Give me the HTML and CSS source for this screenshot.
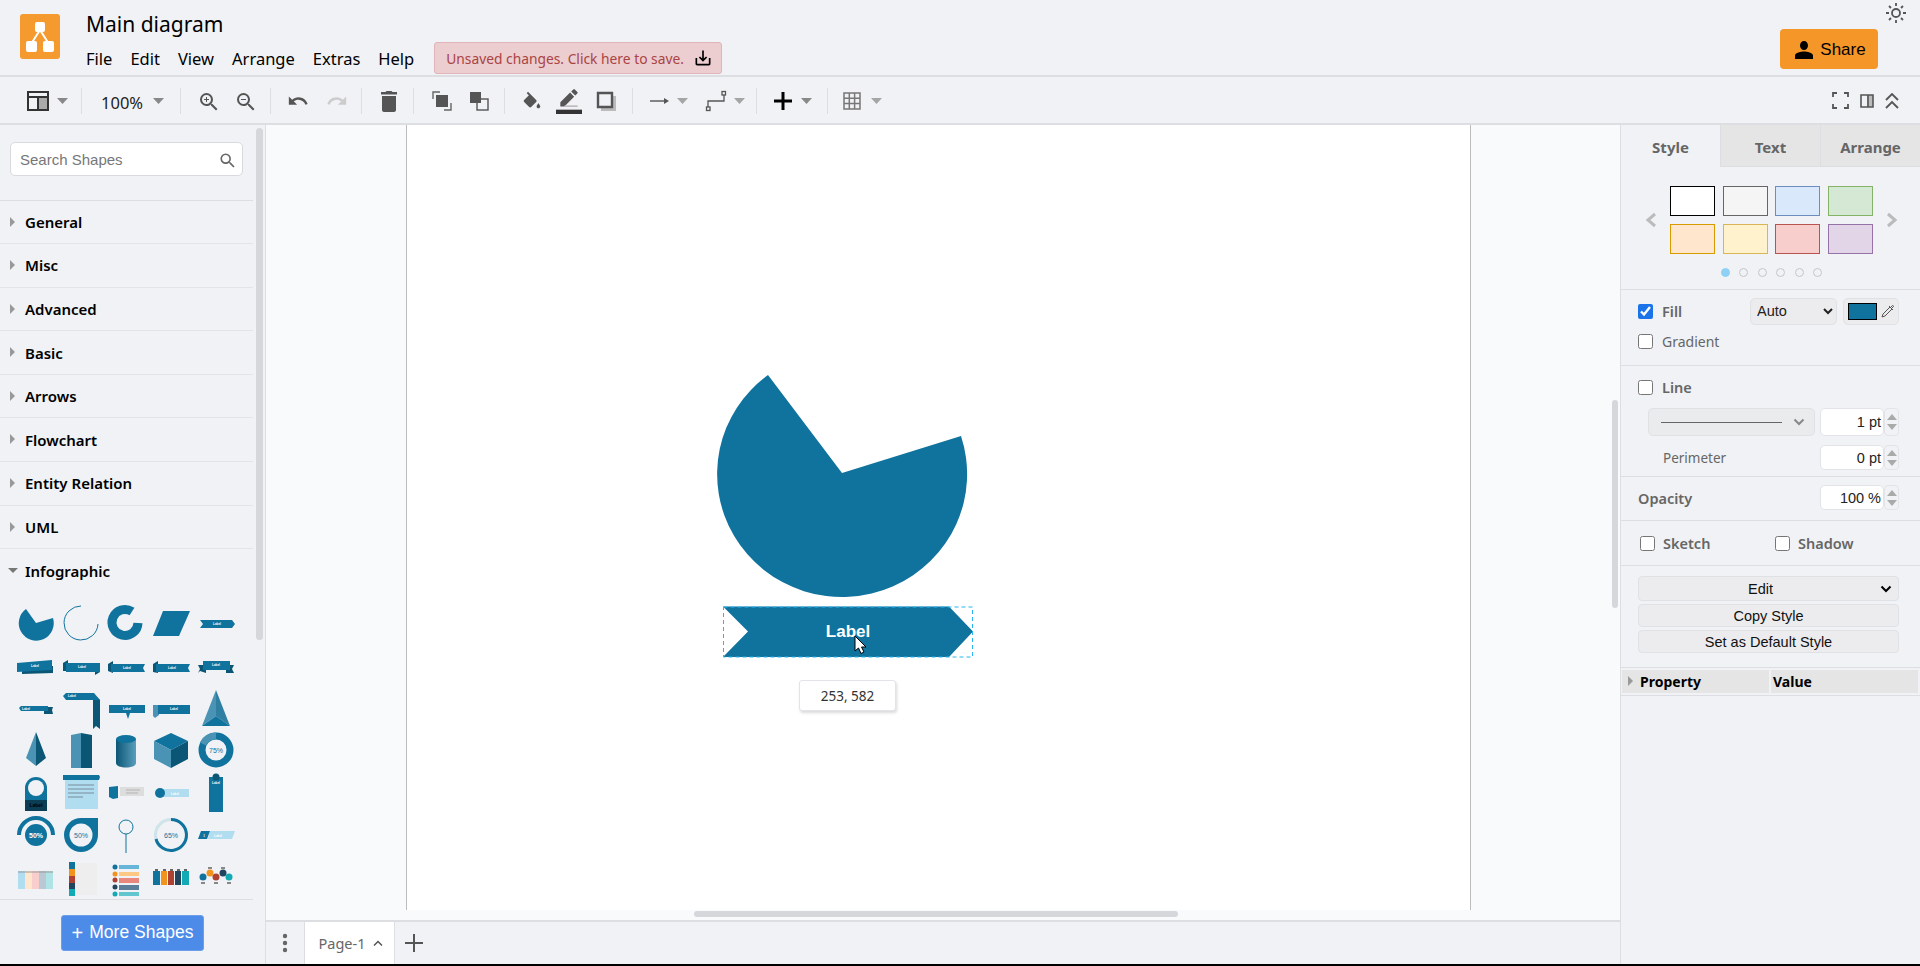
FILE: index.html
```html
<!DOCTYPE html>
<html lang="en">
<head>
    <meta charset="UTF-8">
    <title>Main diagram</title>
    <link rel="stylesheet" href="styles.css">
</head>
<body>
<svg class="sprites" width="0" height="0">
    <symbol id="i-lens" viewBox="0 0 24 24"><path d="M15.5 14h-.79l-.28-.27A6.471 6.471 0 0 0 16 9.5 6.5 6.5 0 1 0 9.5 16c1.61 0 3.09-.59 4.23-1.57l.27.28v.79l5 4.99L20.49 19l-4.99-5zm-6 0C7.01 14 5 11.99 5 9.5S7.01 5 9.5 5 14 7.01 14 9.5 11.99 14 9.5 14z"/></symbol>
    <symbol id="i-caret" viewBox="0 0 11 6"><path d="M0 0h11L5.5 6z"/></symbol>
    <symbol id="i-chev" viewBox="0 0 12 8"><path d="M1.5 1.5 6 6l4.5-4.5" fill="none" stroke="currentColor" stroke-width="2"/></symbol>
</svg>

<div class="app">
    <header class="header">
        <div class="logo">
            <svg width="30" height="34" viewBox="0 0 30 34">
                <path d="M15 10 6 24M15 10l9 14" stroke="#fff" stroke-width="2" fill="none"/>
                <rect x="10" y="2" width="10" height="10" rx="2" fill="#fff"/>
                <rect x="1" y="21" width="11" height="11" rx="2" fill="#fff"/>
                <rect x="18" y="21" width="11" height="11" rx="2" fill="#fff"/>
            </svg>
        </div>
        <div class="title-col">
            <div class="title">Main diagram</div>
            <div class="menu-row">
                <a class="menu">File</a>
                <a class="menu">Edit</a>
                <a class="menu">View</a>
                <a class="menu">Arrange</a>
                <a class="menu">Extras</a>
                <a class="menu">Help</a>
                <div class="save-note">
                    <span>Unsaved changes. Click here to save.</span>
                    <svg width="20" height="20" viewBox="0 0 24 24"><path d="M19 12v7H5v-7H3v7c0 1.1.9 2 2 2h14c1.1 0 2-.9 2-2v-7h-2zm-6 .67l2.59-2.58L17 11.5l-5 5-5-5 1.41-1.41L11 12.67V3h2z"/></svg>
                </div>
            </div>
        </div>
        <div class="header-right">
            <svg class="sun" width="22" height="22" viewBox="0 0 22 22" stroke="#555" fill="none">
                <circle cx="11" cy="11" r="4" stroke-width="1.8"/>
                <path d="M11 1v3M11 18v3M1 11h3M18 11h3M4 4l2 2M16 16l2 2M4 18l2-2M16 6l2-2" stroke-width="1.8"/>
            </svg>
            <div class="share">
                <svg width="24" height="24" viewBox="0 0 24 24"><path d="M12 12c2.21 0 4-1.79 4-4.5S14.21 3 12 3 8 4.8 8 7.5 9.79 12 12 12zm0 1.5c-2.67 0-9 1.34-9 4V21h18v-3.5c0-2.66-6.33-4-9-4z"/></svg>
                <span>Share</span>
            </div>
        </div>
    </header>

    <div class="toolbar">
        <div class="tb-group tb-view">
            <svg width="22" height="24" viewBox="0 0 22 24"><path d="M1 3h20v18H1z" fill="none" stroke="#333" stroke-width="2"/><path d="M1 8h20M11 8v13" stroke="#333" stroke-width="2"/><path d="M12 9h8v11h-8z" fill="#aaa"/></svg>
            <svg class="caret" width="11" height="6"><use href="#i-caret"/></svg>
        </div>
        <div class="tb-group tb-zoom">
            <span class="zoom-val">100%</span>
            <svg class="caret" width="11" height="6"><use href="#i-caret"/></svg>
        </div>
        <div class="tb-group tb-lens">
            <svg width="21" height="21" viewBox="0 0 21 21"><use href="#i-lens" width="24" height="24"/><path d="M12 10h-2v2H9v-2H7V9h2V7h1v2h2z"/></svg>
            <svg width="21" height="21" viewBox="0 0 21 21"><use href="#i-lens" width="24" height="24"/><path d="M7 9h5v1H7z"/></svg>
        </div>
        <div class="tb-group tb-undo">
            <svg width="22" height="22" viewBox="0 0 24 24"><path d="M12.5 8c-2.65 0-5.05.99-6.9 2.6L2 7v9h9l-3.62-3.62c1.39-1.16 3.16-1.88 5.12-1.88 3.54 0 6.55 2.31 7.6 5.5l2.37-.78C21.08 11.03 17.15 8 12.5 8z"/></svg>
            <svg class="dim" width="22" height="22" viewBox="0 0 24 24"><path d="M18.4 10.6C16.55 8.99 14.15 8 11.5 8c-4.65 0-8.58 3.03-9.96 7.22L3.9 16c1.05-3.19 4.05-5.5 7.6-5.5 1.95 0 3.73.72 5.12 1.88L13 16h9V7l-3.6 3.6z"/></svg>
        </div>
        <div class="tb-group tb-del">
            <svg width="24" height="24" viewBox="0 0 24 24"><path d="M5 21c0 1.1.9 2 2 2h10c1.1 0 2-.9 2-2V7H5v14zM20 3h-4.5l-1-1h-5l-1 1H4v2.5h16V3z"/></svg>
        </div>
        <div class="tb-group tb-order">
            <svg width="20" height="20" viewBox="0 0 20 20"><path d="M1 8V1h7M12 19h7v-7" fill="none" stroke="#666" stroke-width="1.4"/><rect x="4" y="4" width="12" height="12" fill="#555"/></svg>
            <svg width="20" height="20" viewBox="0 0 20 20"><rect x="1" y="1" width="11" height="11" fill="#555"/><rect x="8" y="8" width="11" height="11" fill="#f0f2f5" stroke="#555" stroke-width="1.4"/><rect x="8" y="8" width="4" height="4" fill="#555"/></svg>
        </div>
        <div class="tb-group tb-style">
            <svg width="22" height="24" viewBox="0 0 24 24"><path d="M16.56 10.94 7.62 2 6.21 3.41l2.38 2.38-5.15 5.15c-.59.59-.59 1.54 0 2.12l5.5 5.5c.29.29.68.44 1.06.44s.77-.15 1.06-.44l5.5-5.5c.59-.58.59-1.53 0-2.12zM19 14.5s-2 2.17-2 3.5c0 1.1.9 2 2 2s2-.9 2-2c0-1.33-2-3.5-2-3.5z"/></svg>
            <svg width="26" height="26" viewBox="0 0 24 24"><path d="M16.75 8 13 4.25l-9 9V17h3.75zm2.96-2.96c.39-.39.39-1.02 0-1.41l-2.34-2.34a1 1 0 0 0-1.41 0L14 3.25 17.75 7z"/><path d="M0 20h24v4H0z" fill="#333"/><path d="M8 16h12v1.5H8z" fill="#bbb"/></svg>
            <svg class="shadow-ic" width="20" height="20" viewBox="0 0 20 20"><path d="M5 5h15v15H5z" fill="#bbb"/><path d="M2 2h14v14H2z" fill="#f0f2f5" stroke="#555" stroke-width="2.4"/></svg>
        </div>
        <div class="tb-group tb-edge">
            <svg width="20" height="12" viewBox="0 0 20 12"><path d="M0 5.3h15v1.4H0z"/><path d="M14 3l5 3-5 3z"/></svg>
            <svg class="caret lt" width="11" height="6"><use href="#i-caret"/></svg>
            <svg class="wp" width="22" height="22" viewBox="0 0 22 22" fill="none" stroke="#555" stroke-width="1.3"><path d="M3 17v-6h16V5"/><rect x="1.5" y="17" width="3.5" height="3.5"/><rect x="17" y="1.5" width="3.5" height="3.5"/></svg>
            <svg class="caret lt" width="11" height="6"><use href="#i-caret"/></svg>
        </div>
        <div class="tb-group tb-plus">
            <svg class="plus" width="18" height="18" viewBox="0 0 18 18"><path d="M7.5 0h3v7.5H18v3h-7.5V18h-3v-7.5H0v-3h7.5z" fill="#000"/></svg>
            <svg class="caret" width="11" height="6"><use href="#i-caret"/></svg>
        </div>
        <div class="tb-group tb-table">
            <svg width="18" height="18" viewBox="0 0 18 18" fill="none" stroke="#777" stroke-width="1.5"><path d="M1 1h16v16H1zM1 6.3h16M1 11.6h16M6.3 1v16M11.6 1v16"/></svg>
            <svg class="caret lt" width="11" height="6"><use href="#i-caret"/></svg>
        </div>
        <div class="tb-right">
            <svg width="17" height="17" viewBox="0 0 17 17" fill="none" stroke="#555" stroke-width="1.8"><path d="M1 5V1h4M12 1h4v4M16 12v4h-4M5 16H1v-4"/></svg>
            <svg width="14" height="14" viewBox="0 0 14 14"><path d="M7 1h6v12H7z" fill="#bbb"/><path d="M1 1h12v12H1zM8 1v12" fill="none" stroke="#555" stroke-width="1.6"/></svg>
            <svg width="14" height="16" viewBox="0 0 14 16" fill="none" stroke="#555" stroke-width="1.8"><path d="M1 7l6-6 6 6M1 15l6-6 6 6"/></svg>
        </div>
    </div>

    <div class="main">
        <aside class="sidebar">
            <div class="search-wrap">
                <div class="search">
                    <span>Search Shapes</span>
                    <svg width="17" height="17" viewBox="0 0 21 21" fill="#666"><use href="#i-lens" width="24" height="24"/></svg>
                </div>
            </div>
            <div class="cat"><i class="tri"></i>General</div>
            <div class="cat"><i class="tri"></i>Misc</div>
            <div class="cat"><i class="tri"></i>Advanced</div>
            <div class="cat"><i class="tri"></i>Basic</div>
            <div class="cat"><i class="tri"></i>Arrows</div>
            <div class="cat"><i class="tri"></i>Flowchart</div>
            <div class="cat"><i class="tri"></i>Entity Relation</div>
            <div class="cat"><i class="tri"></i>UML</div>
            <div class="cat cat-open"><i class="tri-down"></i>Infographic</div>

            <div class="palette">
                <!-- row 1 -->
                <svg viewBox="0 0 40 40"><path d="M20 20 37 15A17.5 17.5 0 1 1 10 6Z" fill="#10739e"/></svg>
                <svg viewBox="0 0 40 40"><path d="M20 3A17 17 0 1 0 37 21" fill="none" stroke="#10739e" stroke-width="1"/></svg>
                <svg viewBox="0 0 40 40"><path d="M26 8.5A13 13 0 1 0 32 20" fill="none" stroke="#10739e" stroke-width="9"/></svg>
                <svg viewBox="0 0 40 40"><path d="M2 33 12 8H39L28 33Z" fill="#10739e"/></svg>
                <svg viewBox="0 0 40 40"><path d="M4 17H36L39 21 36 25H4L7 21Z" fill="#10739e"/><text class="tiny" x="21" y="22">Label</text></svg>
                <!-- row 2 -->
                <svg viewBox="0 0 40 40"><path d="M6 20H37V27L6 28Z" fill="#0b5575"/><path d="M1 17 36 14V24L1 26Z" fill="#10739e"/><text class="tiny" x="19" y="21">Label</text></svg>
                <svg viewBox="0 0 40 40"><path d="M7 14V25H2V17Z" fill="#0b5575"/><path d="M5 17H39V26H5Z" fill="#10739e"/><path d="M34 26H39L34 29Z" fill="#0b5575"/><text class="tiny" x="21" y="22">Label</text></svg>
                <svg viewBox="0 0 40 40"><path d="M7 15V27L2 25V18Z" fill="#0b5575"/><path d="M5 18H39L37 22 39 26H5Z" fill="#10739e"/><text class="tiny" x="21" y="23">Label</text></svg>
                <svg viewBox="0 0 40 40"><path d="M7 15V27L2 26V18Z" fill="#0b5575"/><path d="M5 18H39L37 22 39 26H5Z" fill="#10739e"/><text class="tiny" x="21" y="23">Label</text></svg>
                <svg viewBox="0 0 40 40"><path d="M2 19H10V27L4 25 2 27 4 23ZM38 19H30V27L36 27 38 27 36 23Z" fill="#0b5575"/><path d="M7 15H34V24H7Z" fill="#10739e"/><text class="tiny" x="20" y="20">Label</text></svg>
                <!-- row 3 -->
                <svg viewBox="0 0 40 40"><path d="M26 19H37L36 22 37 26H28V23H26Z" fill="#0b5575"/><path d="M3 20 5 18H32V23H5Z" fill="#10739e"/><text class="tiny" x="10" y="22">Label</text></svg>
                <svg viewBox="0 0 40 40"><path d="M32 6 39 12V41L35 38 32 41Z" fill="#0b5575"/><path d="M2 8 5 5H33L39 12H5Z" fill="#10739e"/><text class="tiny" x="11" y="9">Label</text></svg>
                <svg viewBox="0 0 40 40"><path d="M3 17H39V25H24L22 31 20 25H3Z" fill="#10739e"/><text class="tiny" x="21" y="22">Label</text></svg>
                <svg viewBox="0 0 40 40"><path d="M2 17H8V27L4 30 2 28Z" fill="#4a93b5"/><path d="M7 17H39V26H7Z" fill="#10739e"/><text class="tiny" x="23" y="22">Label</text></svg>
                <svg viewBox="0 0 40 40"><path d="M20 2 6 38 20 28Z" fill="#4a93b5"/><path d="M20 2 34 38 20 28Z" fill="#2f7fa3"/><path d="M6 38H34L20 28Z" fill="#10739e"/></svg>
                <!-- row 4 -->
                <svg viewBox="0 0 40 40"><path d="M20 2 10 28 20 36Z" fill="#4a93b5"/><path d="M20 2 30 28 20 36Z" fill="#0b5575"/></svg>
                <svg viewBox="0 0 40 40"><path d="M10 5 20 3V38H10Z" fill="#4a93b5"/><path d="M20 3 31 5V38H20Z" fill="#0b5575"/></svg>
                <svg viewBox="0 0 40 40"><defs><linearGradient id="cyl"><stop offset="0" stop-color="#0b5575"/><stop offset="1" stop-color="#5a9fbd"/></linearGradient></defs><path d="M10 9H30V33C30 39 10 39 10 33Z" fill="url(#cyl)"/><ellipse cx="20" cy="9" rx="10" ry="4" fill="#10739e"/></svg>
                <svg viewBox="0 0 40 40"><path d="M20 3 37 11 20 20 3 11Z" fill="#10739e"/><path d="M3 11 20 20V38L3 29Z" fill="#4a93b5"/><path d="M37 11 20 20V38L37 29Z" fill="#0b5575"/></svg>
                <svg viewBox="0 0 40 40"><circle cx="20" cy="20" r="14" fill="none" stroke="#10739e" stroke-width="7"/><path d="M7 14A14 14 0 0 1 20 6" fill="none" stroke="#4a93b5" stroke-width="7"/><text class="pct" x="20" y="22.5">75%</text></svg>
                <!-- row 5 -->
                <svg viewBox="0 0 40 40"><path d="M9 36V15A11 11 0 0 1 31 15V36Z" fill="#10739e"/><path d="M9 27H31V38H9Z" fill="#0b3d55"/><circle cx="20" cy="15" r="8" fill="#f0f2f5"/><text class="tiny dark" x="20" y="34">Label</text></svg>
                <svg viewBox="0 0 40 40"><path d="M4 7H37V36H4Z" fill="#b1ddf0"/><path d="M2 2H38L39 4 38 7H2Z" fill="#10739e"/><path d="M7 12H33M7 16H33M7 20H33M7 24H22" stroke="#556" stroke-width=".6"/></svg>
                <svg viewBox="0 0 40 40"><path d="M3 14 12 13V25L7 26 3 24Z" fill="#10739e"/><path d="M14 14H38V23H14Z" fill="#ddd"/><path d="M20 17H34M20 20H32" stroke="#999" stroke-width=".6"/></svg>
                <svg viewBox="0 0 40 40"><path d="M6 16H38V24H6Z" fill="#b1ddf0"/><circle cx="9" cy="20" r="5" fill="#10739e"/><text class="tiny" x="24" y="21.5">Label</text></svg>
                <svg viewBox="0 0 40 40"><path d="M13 4H27V39H13Z" fill="#10739e"/><circle cx="20" cy="4" r="3.5" fill="#0b5575"/><text class="tiny" x="20" y="11">Label</text></svg>
                <!-- row 6 -->
                <svg viewBox="0 0 40 40"><path d="M3 20A17 17 0 0 1 37 20" fill="none" stroke="#10739e" stroke-width="4"/><circle cx="20" cy="20" r="11" fill="#10739e"/><text class="pct light" x="20" y="22.5">50%</text></svg>
                <svg viewBox="0 0 40 40"><path d="M37 3V20A17 17 0 1 1 20 3Z" fill="#10739e"/><circle cx="20" cy="20" r="11.5" fill="#f0f2f5"/><text class="pct" x="20" y="22.5">50%</text></svg>
                <svg viewBox="0 0 40 40"><circle cx="20" cy="12" r="7" fill="none" stroke="#10739e" stroke-width="1"/><path d="M20 19V38" stroke="#10739e" stroke-width="1"/></svg>
                <svg viewBox="0 0 40 40"><circle cx="20" cy="20" r="15.5" fill="none" stroke="#cfe3ea" stroke-width="3"/><path d="M20 4.5A15.5 15.5 0 1 1 5 24" fill="none" stroke="#10739e" stroke-width="3"/><text class="pct" x="20" y="22.5">65%</text></svg>
                <svg viewBox="0 0 40 40"><path d="M14 16H39L36 24H12Z" fill="#b1ddf0"/><path d="M5 16H14L11 24H2Z" fill="#10739e"/><text class="tiny" x="8" y="21.5">1</text><text class="tiny" x="22" y="21.5">Label</text></svg>
                <!-- row 7 -->
                <svg viewBox="0 0 40 40"><path d="M2 14H9V32H2Z" fill="#b1ddf0"/><path d="M9 14H16V32H9Z" fill="#ffe6cc"/><path d="M16 14H23V32H16Z" fill="#f8cecc"/><path d="M23 14H30V32H23Z" fill="#bac8d3"/><path d="M30 14H37V32H30Z" fill="#b0e3e6"/><path d="M2 14H37V16H2Z" fill="#999" opacity=".5"/></svg>
                <svg viewBox="0 0 40 40"><path d="M14 6H36V38H14Z" fill="#eee"/><path d="M8 5H14V12H8Z" fill="#10739e"/><path d="M8 12H14V19H8Z" fill="#f2931e"/><path d="M8 19H14V26H8Z" fill="#ae4132"/><path d="M8 26H14V32H8Z" fill="#23445d"/><path d="M8 32H14V39H8Z" fill="#12aab5"/></svg>
                <svg viewBox="0 0 40 40"><path d="M13 8H33V12H13Z" fill="#65b6d8"/><path d="M13 15H33V19H13Z" fill="#fdc784"/><path d="M13 21H33V26H13Z" fill="#e9887c"/><path d="M13 28H33V33H13Z" fill="#5d7f99"/><path d="M13 35H33V39H13Z" fill="#61c6ce"/><circle cx="9" cy="10" r="2.5" fill="#10739e"/><circle cx="9" cy="17" r="2.5" fill="#f2931e"/><circle cx="9" cy="23" r="2.5" fill="#ae4132"/><circle cx="9" cy="30" r="2.5" fill="#23445d"/><circle cx="9" cy="37" r="2.5" fill="#12aab5"/></svg>
                <svg viewBox="0 0 40 40"><path d="M2 14H9V28H2Z" fill="#10739e"/><path d="M10 14H16V28H10Z" fill="#f2931e"/><path d="M17 14H23V28H17Z" fill="#ae4132"/><path d="M24 14H30V28H24Z" fill="#23445d"/><path d="M31 14H38V28H31Z" fill="#12aab5"/><path d="M4 12h3v2H4zM12 12h3v2h-3zM19 12h3v2h-3zM26 12h3v2h-3zM33 12h3v2h-3z" fill="#666"/></svg>
                <svg viewBox="0 0 40 40"><circle cx="7" cy="20" r="3.5" fill="#10739e"/><circle cx="14" cy="16" r="3.5" fill="#f2931e"/><circle cx="20" cy="20" r="3.5" fill="#ae4132"/><circle cx="27" cy="16" r="3.5" fill="#23445d"/><circle cx="33" cy="20" r="3.5" fill="#12aab5"/><path d="M5 25h4v2H5zM12 10h4v2h-4zM18 25h4v2h-4zM25 10h4v2h-4zM31 25h4v2h-4z" fill="#888"/></svg>
            </div>

            <div class="more-wrap">
                <div class="more-btn"><span class="more-plus">+</span> More Shapes</div>
            </div>
            <div class="side-scroll"></div>
        </aside>

        <section class="center">
            <div class="canvas">
                <div class="page"></div>
                <svg class="drawing" width="1354" height="785" viewBox="266 125 1354 785">
                    <path d="M842 473 961 436A125 123 0 1 1 768 375Z" fill="#10739e"/>
                    <path d="M723 606.5H949L973 631.5 949 657H723L748 631.5Z" fill="#10739e"/>
                    <rect x="723.5" y="607" width="249" height="50" fill="none" stroke="#29b6f2" stroke-dasharray="4 3"/>
                    <text class="shape-label" x="848" y="637">Label</text>
                    <path d="M855 636V651L858.5 648 861 653.5 864 652 861.5 647H866Z" fill="#fff" stroke="#000"/>
                </svg>
                <div class="coord">253, 582</div>
                <div class="v-scroll"></div>
                <div class="h-scroll"></div>
            </div>
            <footer class="pagebar">
                <svg class="dots" width="6" height="20" viewBox="0 0 6 20" fill="#666"><circle cx="3" cy="3" r="2.2"/><circle cx="3" cy="10" r="2.2"/><circle cx="3" cy="17" r="2.2"/></svg>
                <div class="page-tab">Page-1
                    <svg width="10" height="6" viewBox="0 0 10 6" fill="none" stroke="#555" stroke-width="1.5"><path d="M1 5.5l4-4 4 4"/></svg>
                </div>
                <svg class="add-page" width="18" height="18" viewBox="0 0 18 18"><path d="M8 0h2v8h8v2h-8v8H8v-8H0V8h8z" fill="#555"/></svg>
            </footer>
        </section>

        <aside class="panel">
            <div class="tabs">
                <div class="tab tab-on">Style</div>
                <div class="tab">Text</div>
                <div class="tab">Arrange</div>
            </div>

            <div class="sec sec-swatch">
                <svg class="nav-arrow" width="12" height="16" viewBox="0 0 12 16"><path d="M10 2 3 8l7 6" fill="none" stroke="#bbb" stroke-width="3"/></svg>
                <div class="swatches">
                    <div class="sw sw-1"></div><div class="sw sw-2"></div><div class="sw sw-3"></div><div class="sw sw-4"></div>
                    <div class="sw sw-5"></div><div class="sw sw-6"></div><div class="sw sw-7"></div><div class="sw sw-8"></div>
                </div>
                <svg class="nav-arrow" width="12" height="16" viewBox="0 0 12 16"><path d="M2 2l7 6-7 6" fill="none" stroke="#bbb" stroke-width="3"/></svg>
                <div class="pager"><i class="on"></i><i></i><i></i><i></i><i></i><i></i></div>
            </div>

            <div class="sec sec-fill">
                <div class="row row-fill">
                    <input type="checkbox" class="chk" checked>
                    <span class="lbl lbl-b">Fill</span>
                    <select class="sel-auto"><option>Auto</option></select>
                    <div class="color-btn">
                        <i class="color-chip"></i>
                        <svg width="14" height="14" viewBox="0 0 14 14" fill="none" stroke="#555"><path d="M9 3 2 10l-1 3 3-1 7-7M8 2l4 4M9.5 3.5l2-2a1 1 0 0 1 1 1l-2 2"/></svg>
                    </div>
                </div>
                <div class="row row-grad">
                    <input type="checkbox" class="chk">
                    <span class="lbl">Gradient</span>
                </div>
            </div>

            <div class="sec sec-line">
                <div class="row row-lineh">
                    <input type="checkbox" class="chk">
                    <span class="lbl lbl-b">Line</span>
                </div>
                <div class="row row-stroke">
                    <div class="line-sel">
                        <i class="line-sample"></i>
                        <svg width="12" height="8" viewBox="0 0 12 8" color="#888"><use href="#i-chev"/></svg>
                    </div>
                    <div class="num">1 pt</div>
                    <div class="spin spin-tall"><i class="up"></i><i class="dn"></i></div>
                </div>
                <div class="row row-perim">
                    <span class="lbl lbl-p">Perimeter</span>
                    <div class="num num-r">0 pt</div>
                    <div class="spin"><i class="up"></i><i class="dn"></i></div>
                </div>
            </div>

            <div class="sec sec-op">
                <span class="lbl lbl-b">Opacity</span>
                <div class="num num-r">100 %</div>
                <div class="spin"><i class="up"></i><i class="dn"></i></div>
            </div>

            <div class="sec sec-sketch">
                <input type="checkbox" class="chk">
                <span class="lbl lbl-b lbl-sketch">Sketch</span>
                <input type="checkbox" class="chk">
                <span class="lbl lbl-b">Shadow</span>
            </div>

            <div class="sec sec-btns">
                <div class="btn btn-edit">Edit
                    <svg width="12" height="8" viewBox="0 0 12 8" color="#000"><use href="#i-chev"/></svg>
                </div>
                <div class="btn">Copy Style</div>
                <div class="btn">Set as Default Style</div>
            </div>

            <div class="sec sec-prop">
                <div class="prop-head prop-a"><i class="tri"></i>Property</div>
                <div class="prop-head prop-b">Value</div>
            </div>
        </aside>
    </div>
</div>
</body>
</html>
```

FILE: styles.css
```css
* {
    box-sizing: border-box;
}

body {
    margin: 0;
    height: 966px;
    overflow: hidden;
    background-color: #000;
    font-family: "Noto Sans", "Open Sans", sans-serif;
    color: #000;
}

.sprites {
    position: absolute;
}

.app {
    height: 964px;
    display: flex;
    flex-direction: column;
    background-color: #f0f2f5;
}

/* header */
.header {
    height: 77px;
    flex: none;
    display: flex;
    border-bottom: 2px solid #dcdee1;
}

.logo {
    width: 40px;
    height: 45px;
    margin: 14px 26px 0 20px;
    background-color: #f49a2e;
    border-radius: 3px;
    display: flex;
    align-items: center;
    justify-content: center;
}

.title {
    font-size: 21px;
    line-height: 28px;
    margin-top: 10px;
}

.menu-row {
    display: flex;
    align-items: center;
    margin-top: 4px;
}

.menu {
    font-size: 16.5px;
    margin-right: 18px;
}

.save-note {
    display: flex;
    align-items: center;
    gap: 9px;
    height: 32px;
    width: 288px;
    margin-left: 2px;
    padding-left: 11px;
    background-color: #eccdd0;
    border: 1px solid #e0b4b8;
    border-radius: 3px;
    font-size: 13.8px;
    color: #a94442;
}

.header-right {
    margin-left: auto;
    padding-right: 13px;
    display: flex;
    flex-direction: column;
    align-items: flex-end;
}

.sun {
    margin-top: 2px;
}

.share {
    width: 98px;
    height: 40px;
    margin: 5px 29px 0 0;
    padding-top: 1px;
    display: flex;
    align-items: center;
    justify-content: center;
    gap: 4px;
    background-color: #f49628;
    border-radius: 4px;
    font-family: "Liberation Sans", sans-serif;
    font-size: 17px;
}

/* toolbar */
.toolbar {
    height: 48px;
    flex: none;
    display: flex;
    align-items: center;
    padding-top: 1px;
    border-bottom: 2px solid #dcdee1;
}

.tb-group {
    height: 26px;
    display: flex;
    align-items: center;
    border-right: 1px solid #dcdee1;
}

.tb-group svg:not([fill]) {
    fill: #555;
    flex: none;
}

.tb-group svg.caret {
    fill: #888;
}

.tb-group svg.lt {
    fill: #a5a5a5;
}

.tb-group svg.dim {
    fill: #ccc;
}

.tb-view { width: 82px; padding-left: 27px; gap: 8px; }
.tb-zoom { width: 99px; padding-left: 19px; gap: 10px; }
.tb-lens { width: 90px; padding-left: 16px; gap: 16px; }
.tb-undo { width: 91px; padding-left: 16px; gap: 17px; }
.tb-del { width: 52px; padding-left: 15px; }
.tb-order { width: 91px; padding-left: 18px; gap: 17px; }
.tb-style { width: 128px; padding-left: 16px; gap: 13px; }
.tb-edge { width: 124px; padding-left: 17px; gap: 7px; }
.tb-plus { width: 71px; padding-left: 17px; gap: 9px; }
.tb-table { border-right: none; padding-left: 15px; gap: 10px; }

.tb-style .shadow-ic {
    margin-left: 1px;
}

.tb-edge .wp {
    margin-left: 10px;
}

.zoom-val {
    font-size: 16.5px;
    color: #222;
    padding-top: 4px;
}

.tb-right {
    margin-left: auto;
    padding-right: 21px;
    display: flex;
    align-items: center;
    gap: 11px;
}

/* main area */
.main {
    flex: 1;
    min-height: 0;
    display: flex;
}

.sidebar {
    width: 266px;
    flex: none;
    position: relative;
    border-right: 1px solid #dcdee1;
}

.search-wrap {
    height: 75.5px;
    width: 253px;
    padding: 17px 0 0 10px;
    border-bottom: 1px solid #dcdee1;
}

.search {
    width: 233px;
    height: 34px;
    display: flex;
    align-items: center;
    justify-content: space-between;
    padding: 0 7px 0 9px;
    background-color: #fff;
    border: 1px solid #d8dadd;
    border-radius: 5px;
    font-family: "Liberation Sans", sans-serif;
    font-size: 15px;
    color: #777;
}

.search svg {
    fill: #666;
}

.cat {
    position: relative;
    width: 253px;
    height: 43.6px;
    padding-left: 25px;
    display: flex;
    align-items: center;
    border-bottom: 1px solid #e2e4e7;
    font-size: 15px;
    font-weight: 600;
}

.cat-open {
    border-bottom: none;
}

.tri {
    position: absolute;
    left: 10px;
    top: 16px;
    border-left: 5px solid #999;
    border-top: 5px solid transparent;
    border-bottom: 5px solid transparent;
}

.tri-down {
    position: absolute;
    left: 8px;
    top: 19px;
    border-top: 5px solid #777;
    border-left: 5px solid transparent;
    border-right: 5px solid transparent;
}

.palette {
    width: 253px;
    height: 307px;
    padding: 9.5px 0 0 13.5px;
    display: grid;
    grid-template-columns: repeat(5, 45px);
    grid-auto-rows: 42.3px;
    justify-items: center;
    align-items: center;
    border-bottom: 1px solid #dcdee1;
    overflow: hidden;
}

.palette svg {
    width: 40px;
    height: 40px;
    overflow: visible;
}

.tiny {
    font-family: "Liberation Sans", sans-serif;
    font-size: 3px;
    font-weight: 700;
    fill: #fff;
    text-anchor: middle;
}

.tiny.dark {
    font-size: 5px;
    fill: #000;
}

.pct {
    font-family: "Liberation Sans", sans-serif;
    font-size: 7px;
    fill: #10739e;
    text-anchor: middle;
}

.pct.light {
    fill: #fff;
    font-weight: 700;
}

.more-wrap {
    width: 265px;
    padding: 15px 0 0 61px;
}

.more-btn {
    width: 143px;
    height: 36px;
    display: flex;
    align-items: center;
    justify-content: center;
    gap: 6px;
    background-color: #4d8be8;
    border: 1px solid #6d9eea;
    border-radius: 3px;
    color: #fff;
    font-family: "Liberation Sans", sans-serif;
    font-size: 17.5px;
}

.more-plus {
    font-size: 20px;
    line-height: 20px;
}

.side-scroll {
    position: absolute;
    left: 256px;
    top: 3px;
    width: 7px;
    height: 512px;
    background-color: #d5d7da;
    border-radius: 4px;
}

.center {
    flex: 1;
    min-width: 0;
    display: flex;
    flex-direction: column;
}

.canvas {
    height: 795px;
    flex: none;
    position: relative;
    background-color: #f9fafb;
}

.page {
    position: absolute;
    left: 140px;
    top: 0;
    width: 1065px;
    height: 785px;
    background-color: #fff;
    border-left: 1px solid #bdbdbd;
    border-right: 1px solid #bdbdbd;
}

.drawing {
    position: absolute;
    left: 0;
    top: 0;
}

.shape-label {
    font-family: "Liberation Sans", sans-serif;
    font-size: 17px;
    font-weight: 700;
    fill: #fff;
    text-anchor: middle;
}

.coord {
    position: absolute;
    left: 533px;
    top: 555px;
    width: 97px;
    height: 31px;
    display: flex;
    align-items: center;
    justify-content: center;
    background-color: #fff;
    border: 1px solid #e3e4e8;
    border-radius: 3px;
    box-shadow: 1px 2px 3px rgba(0, 0, 0, 0.15);
    font-size: 13.5px;
    color: #333;
}

.v-scroll {
    position: absolute;
    left: 1346px;
    top: 275px;
    width: 6px;
    height: 208px;
    background-color: #d5d7da;
    border-radius: 3px;
}

.h-scroll {
    position: absolute;
    left: 428px;
    top: 786px;
    width: 484px;
    height: 6px;
    background-color: #d5d7da;
    border-radius: 3px;
}

.pagebar {
    flex: 1;
    display: flex;
    align-items: center;
    border-top: 2px solid #dcdee1;
}

.dots {
    margin-left: 16px;
}

.page-tab {
    width: 91px;
    height: 100%;
    margin-left: 16px;
    padding-left: 3px;
    display: flex;
    align-items: center;
    justify-content: center;
    gap: 8px;
    background-color: #fff;
    border-left: 1px solid #dcdee1;
    border-right: 1px solid #dcdee1;
    font-size: 14.5px;
    color: #666;
}

.add-page {
    margin-left: 10px;
}

/* right panel */
.panel {
    width: 300px;
    flex: none;
    border-left: 1px solid #dcdee1;
}

.tabs {
    height: 42px;
    display: flex;
}

.tab {
    flex: 1;
    display: flex;
    align-items: center;
    justify-content: center;
    padding-top: 2px;
    background-color: #e5e5e5;
    border-bottom: 1px solid #dcdee1;
    border-left: 1px solid #dcdee1;
    font-size: 15px;
    font-weight: 700;
    color: #666;
}

.tab-on {
    background-color: transparent;
    border-bottom: none;
    border-left: none;
}

.sec {
    border-bottom: 1px solid #dcdee1;
}

.sec-swatch {
    height: 123px;
    padding: 19px 0 0 24px;
    display: grid;
    grid-template-columns: 12px 203px 12px;
    grid-template-rows: 68px auto;
    column-gap: 13px;
    align-items: center;
}

.swatches {
    display: grid;
    grid-template-columns: repeat(4, 45px);
    grid-auto-rows: 30px;
    justify-content: space-between;
    row-gap: 8px;
}

.sw {
    border: 1px solid;
}

.sw-1 { background-color: #fff; border-color: #000; }
.sw-2 { background-color: #f5f5f5; border-color: #666; }
.sw-3 { background-color: #dae8fc; border-color: #6c8ebf; }
.sw-4 { background-color: #d5e8d4; border-color: #82b366; }
.sw-5 { background-color: #ffe6cc; border-color: #d79b00; }
.sw-6 { background-color: #fff2cc; border-color: #d6b656; }
.sw-7 { background-color: #f8cecc; border-color: #b85450; }
.sw-8 { background-color: #e1d5e7; border-color: #9673a6; }

.pager {
    grid-column: 2;
    display: flex;
    justify-content: center;
    gap: 9.4px;
    margin-top: 14px;
    align-self: start;
}

.pager i {
    width: 9px;
    height: 9px;
    border: 1px solid #c4c6c9;
    border-radius: 50%;
}

.pager i.on {
    background-color: #8fd0f5;
    border-color: #8fd0f5;
}

.row {
    display: flex;
    align-items: center;
}

.chk {
    width: 15px;
    height: 15px;
    margin: 0;
    flex: none;
    accent-color: #1a73e8;
}

.lbl {
    font-size: 14px;
    color: #666;
}

.lbl-b {
    font-size: 14.5px;
    font-weight: 600;
}

.lbl-p {
    font-size: 13.5px;
}

.sec-fill {
    height: 76px;
    padding: 7px 21px 0 17px;
}

.row-fill {
    height: 28px;
}

.row-fill .lbl {
    margin-left: 9px;
}

.row-grad {
    margin-top: 7px;
}

.row-grad .lbl {
    margin-left: 9px;
}

.sel-auto {
    width: 87px;
    height: 27px;
    margin-left: auto;
    padding-left: 2px;
    background-color: #ececee;
    border: 1px solid #e0e1e4;
    border-radius: 5px;
    font-family: "Liberation Sans", sans-serif;
    font-size: 14.5px;
    color: #222;
}

.color-btn {
    width: 56px;
    height: 27px;
    margin-left: 6px;
    padding-left: 4px;
    display: flex;
    align-items: center;
    gap: 4px;
    background-color: #ececee;
    border: 1px solid #e0e1e4;
    border-radius: 5px;
}

.color-chip {
    width: 29px;
    height: 17px;
    background-color: #10739e;
    border: 1px solid #000;
}

.sec-line {
    height: 111px;
    padding: 11px 21px 0 17px;
}

.row-lineh .lbl {
    margin-left: 9px;
}

.row-stroke {
    margin: 11px 0 0 10px;
}

.line-sel {
    width: 167px;
    height: 28px;
    margin-right: 5px;
    padding: 0 9px 0 12px;
    display: flex;
    align-items: center;
    gap: 11px;
    background-color: #e9ebed;
    border: 1px solid #e0e1e4;
    border-radius: 5px;
}

.line-sample {
    flex: 1;
    height: 1px;
    background-color: #666;
}

.num {
    width: 64px;
    height: 28px;
    padding-right: 2px;
    display: flex;
    align-items: center;
    justify-content: flex-end;
    background-color: #fff;
    border: 1px solid #e3e4e7;
    border-radius: 5px;
    font-family: "Liberation Sans", sans-serif;
    font-size: 14.5px;
    color: #222;
}

.num-r {
    height: 25px;
    margin-left: auto;
}

.spin {
    width: 15px;
    height: 25px;
    flex: none;
    display: flex;
    flex-direction: column;
    align-items: center;
    justify-content: center;
    gap: 4px;
    border: 1px solid #e3e4e7;
    border-radius: 4px;
}

.spin-tall {
    height: 28px;
}

.spin i {
    border-left: 5px solid transparent;
    border-right: 5px solid transparent;
}

.spin .up {
    border-bottom: 6px solid #aaa;
}

.spin .dn {
    border-top: 6px solid #aaa;
}

.row-perim {
    margin-top: 9px;
    padding-left: 25px;
}

.sec-op {
    height: 44px;
    padding: 0 21px 2px 17px;
    display: flex;
    align-items: center;
}

.sec-sketch {
    height: 45px;
    padding: 0 0 0 19px;
    display: flex;
    align-items: center;
}

.sec-sketch .lbl {
    margin-left: 8px;
}

.lbl-sketch {
    width: 112px;
}

.sec-btns {
    height: 102px;
    padding: 10px 21px 0 17px;
}

.btn {
    height: 23px;
    margin-bottom: 3px;
    display: flex;
    align-items: center;
    justify-content: center;
    background-color: #ececee;
    border: 1px solid #e0e1e4;
    border-radius: 4px;
    font-family: "Liberation Sans", sans-serif;
    font-size: 14.5px;
    color: #111;
}

.btn-edit {
    height: 25px;
    position: relative;
    padding-right: 16px;
}

.btn-edit svg {
    position: absolute;
    right: 6px;
    top: 8px;
}

.sec-prop {
    height: 28px;
    padding: 2px 2px 2px 1px;
    display: flex;
    gap: 2px;
}

.prop-head {
    position: relative;
    display: flex;
    align-items: center;
    background-color: #e5e5e5;
    font-size: 14px;
    font-weight: 700;
}

.prop-a {
    width: 147px;
    padding-left: 18px;
}

.prop-b {
    flex: 1;
    padding-left: 2px;
}

.prop-a .tri {
    left: 6px;
    top: 6px;
}
```
